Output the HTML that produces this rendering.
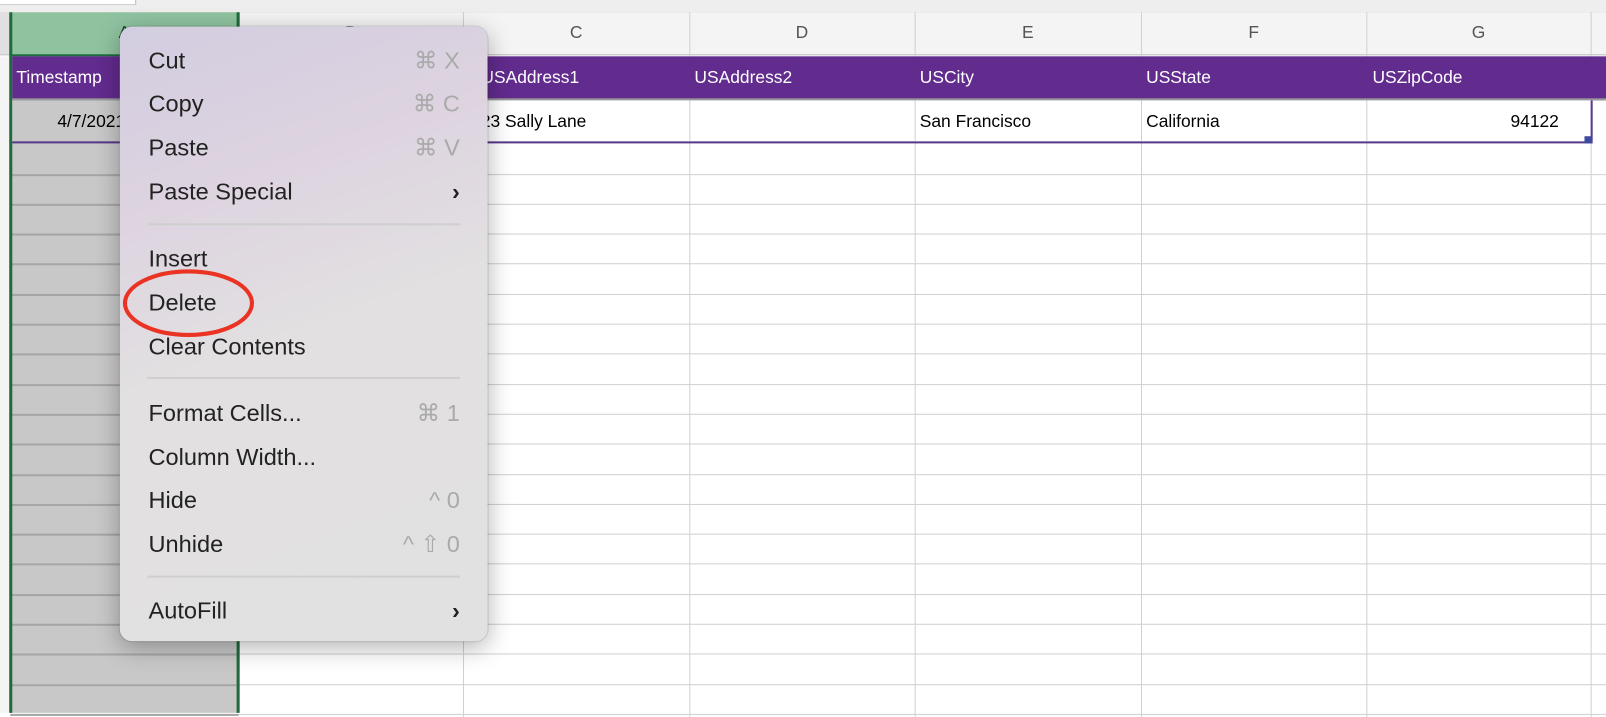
<!DOCTYPE html>
<html><head><style>
body{margin:0;width:1606px;height:696px;overflow:hidden;background:#fff;font-family:"Liberation Sans",sans-serif;position:relative}
#w{position:absolute;left:0;top:0;width:1568px;height:680px;transform:scale(1.02423);transform-origin:0 0}
.a{position:absolute}
.vl{position:absolute;top:12px;bottom:-20px;width:1px;background:#d0d0d0}
.hl{position:absolute;left:10px;width:1600px;height:1px;background:#d0d0d0}
.ch{position:absolute;top:22px;font-size:17px;color:#555;text-align:center}
.ph{position:absolute;top:66px;font-size:17px;color:#fff}
.dt{position:absolute;top:109px;font-size:17px;color:#000}
.menu{position:absolute;left:117px;top:26px;width:359px;height:600px;border-radius:12px;background:linear-gradient(160deg,#d2cde0 0%,#ddd3e0 25%,#e2e0e1 50%,#e1e1e1 100%);box-shadow:0 6px 24px rgba(0,0,0,.3),0 0 0 1px rgba(0,0,0,.12)}
.mi{position:absolute;left:28px;font-size:23px;color:#222;line-height:28px}
.sc{position:absolute;right:27px;font-size:23px;color:#aaa;line-height:28px}
.sep{position:absolute;left:27px;right:27px;height:2px;background:#cfcfcf}
</style></head><body><div id="w">
<div class="a" style="left:0;top:0;width:1606px;height:12px;background:#eee;border-bottom:1px solid #bbb"></div>
<div class="a" style="left:0;top:0;width:132px;height:4px;background:#fff;border-right:1px solid #bbb;border-bottom:1px solid #ccc"></div>
<div class="a" style="left:0;top:12px;width:1606px;height:41px;background:#f4f4f4;border-bottom:1px solid #bbb"></div>
<div class="a" style="left:0;top:12px;width:9px;height:41px;background:#e0e0e0"></div>
<div class="a" style="left:10px;top:12px;width:223px;height:41px;background:#8fc3a0;border-bottom:3px solid #1e6b3c"></div>
<div class="a" style="left:10px;top:55px;width:223px;height:641px;background:#c8c8c8"></div>
<div class="a" style="left:0;top:55px;width:9px;height:641px;background:#f4f4f4"></div>
<div id="g"></div>
<div class="vl" style="left:452px"></div><div class="vl" style="left:673px"></div><div class="vl" style="left:893px"></div><div class="vl" style="left:1114px"></div><div class="vl" style="left:1334px"></div><div class="vl" style="left:1553px"></div>
<script>
var s='';for(var y=169.5;y<700;y+=29.3){s+='<div class="hl" style="top:'+Math.round(y)+'px"></div><div class="a" style="left:10px;width:223px;height:2px;background:#a6a6a6;top:'+Math.round(y)+'px"></div>';}
document.getElementById('g').innerHTML=s;
</script>
<div class="a" style="left:9px;top:12px;width:3px;height:684px;background:#1e6b3c"></div>
<div class="a" style="left:231px;top:12px;width:3px;height:684px;background:#1e6b3c"></div>
<div class="ch" style="left:452px;width:221px">C</div><div class="ch" style="left:673px;width:220px">D</div><div class="ch" style="left:893px;width:221px">E</div><div class="ch" style="left:1114px;width:220px">F</div><div class="ch" style="left:1334px;width:219px">G</div>
<div class="ch" style="left:10px;width:223px;color:#1e4a2e">A</div>
<div class="ch" style="left:233px;width:219px">B</div>
<div class="a" style="left:12px;top:55px;width:1594px;height:41px;background:#622b8e;border-bottom:2px solid #999"></div>
<div class="ph" style="left:16px">Timestamp</div><div class="ph" style="left:470px">USAddress1</div><div class="ph" style="left:678px">USAddress2</div><div class="ph" style="left:898px">USCity</div><div class="ph" style="left:1119px">USState</div><div class="ph" style="left:1340px">USZipCode</div>
<div class="a" style="left:12px;top:98px;width:221px;height:40px;background:#c8c8c8"></div>
<div class="a" style="left:233px;top:98px;width:1320px;height:40px;background:#fff;border-right:2px solid #5a3a8a"></div>
<div class="a" style="left:12px;top:138px;width:1543px;height:2px;background:#5a3a8a"></div>
<div class="a" style="left:1547px;top:133px;width:7px;height:7px;background:#3a4ba0"></div>
<div class="dt" style="left:56px">4/7/2021</div><div class="dt" style="left:460px">123 Sally Lane</div><div class="dt" style="left:898px">San Francisco</div><div class="dt" style="left:1119px">California</div><div class="dt" style="left:1470px;width:52px;text-align:right">94122</div>
<div class="vl" style="left:673px;top:98px;height:40px"></div><div class="vl" style="left:893px;top:98px;height:40px"></div><div class="vl" style="left:1114px;top:98px;height:40px"></div><div class="vl" style="left:1334px;top:98px;height:40px"></div>
<div class="menu">
<div class="mi" style="top:19px">Cut</div><div class="sc" style="top:19px">⌘ X</div>
<div class="mi" style="top:61px">Copy</div><div class="sc" style="top:61px">⌘ C</div>
<div class="mi" style="top:104px">Paste</div><div class="sc" style="top:104px">⌘ V</div>
<div class="mi" style="top:147px">Paste Special</div><div class="sc" style="top:147px;color:#222;font-weight:bold">›</div>
<div class="sep" style="top:192px"></div>
<div class="mi" style="top:212px">Insert</div>
<div class="mi" style="top:255px">Delete</div>
<div class="mi" style="top:298px">Clear Contents</div>
<div class="sep" style="top:342px"></div>
<div class="mi" style="top:363px">Format Cells...</div><div class="sc" style="top:363px">⌘ 1</div>
<div class="mi" style="top:406px">Column Width...</div>
<div class="mi" style="top:448px">Hide</div><div class="sc" style="top:448px">^ 0</div>
<div class="mi" style="top:491px">Unhide</div><div class="sc" style="top:491px">^ ⇧ 0</div>
<div class="sep" style="top:536px"></div>
<div class="mi" style="top:556px">AutoFill</div><div class="sc" style="top:556px;color:#222;font-weight:bold">›</div>
</div>
<svg class="a" style="left:0;top:0" width="1606" height="696"><ellipse cx="184" cy="296" rx="62" ry="31" fill="none" stroke="#ea3323" stroke-width="4"/></svg>
</div></body></html>
